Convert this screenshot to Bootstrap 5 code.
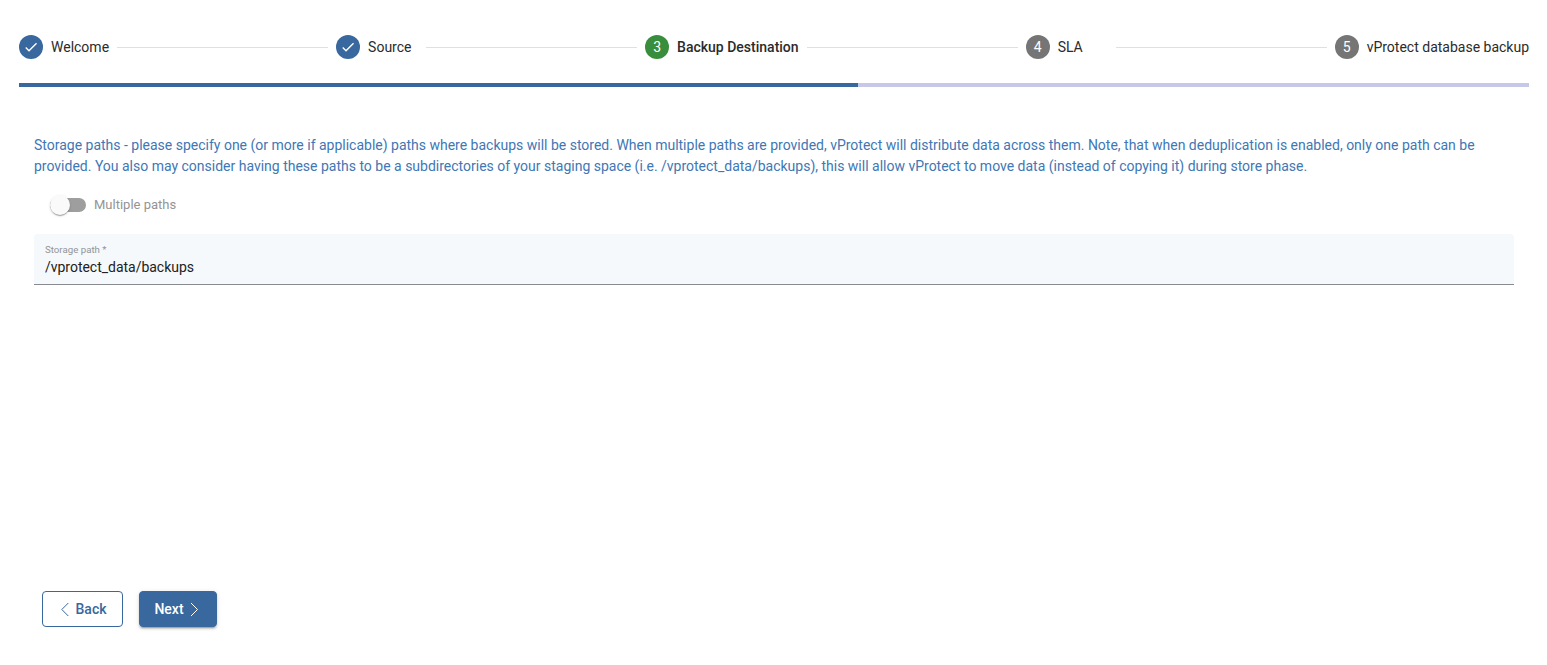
<!DOCTYPE html>
<html lang="en">
<head>
<meta charset="utf-8">
<meta name="viewport" content="width=device-width, initial-scale=1">
<title>vProtect setup</title>
<link href="https://cdn.jsdelivr.net/npm/bootstrap@5.3.0/dist/css/bootstrap.min.css" rel="stylesheet">
<style>
body{font-family:Roboto,"Liberation Sans",sans-serif;font-size:14px;line-height:21px;color:#2b2b2b;background:#fff}
.wizard{padding:35px 18px 38px 19px}
.step-mark{width:24px;height:24px;font-size:14px;line-height:24px;color:#fff;background:#757575}
.step-done .step-mark{background:#38689e}
.step-current .step-mark{background:#388e3c}
.step-current .step-text{font-weight:500}
.step-text{min-width:50px;white-space:nowrap}
.step-line{height:1px;background:#e0e0e0;margin:0 8px}
.wizard .progress{height:4px;border-radius:0;background:#c5c8e8;margin-top:24px}
.wizard .progress-bar{background:#38689e}
.step-body{padding:48px 15px 0}
.hint{color:#4077b5;margin-bottom:15px;letter-spacing:-.004px}
.toggle{padding-left:16px;height:24px;color:#949494;font-size:13px}
.toggle-track{width:36px;height:14px;margin-top:2px;border-radius:8px;background:#9e9e9e}
.toggle-thumb{width:20px;height:20px;top:-3px;left:0;background:#fafafa;box-shadow:0 2px 1px -1px rgba(0,0,0,.2),0 1px 1px rgba(0,0,0,.14),0 1px 3px rgba(0,0,0,.12)}
.path-field{margin-top:18px;height:51px;padding:9px 11px 0;background:#f5f9fc;border-bottom:1px solid #878a90;border-radius:4px 4px 0 0}
.path-field label{font-size:9.7px;line-height:13px;color:#949494}
.path-field input{font-size:14px;line-height:20px;color:#212121;height:20px;margin-top:1px;letter-spacing:-.02px}
.actions{padding-left:23px}
.actions .btn{height:36px;padding:0;font-size:14px;font-weight:500;border-radius:4px;border:1px solid #38689e}
.actions .btn-back{width:81px;padding-right:1px;color:#38689e;background:#fff}
.actions .btn-next{width:78px;color:#fff;background:#38689e;box-shadow:0 3px 1px -2px rgba(0,0,0,.2),0 2px 2px rgba(0,0,0,.14),0 1px 5px rgba(0,0,0,.12)}
</style>
</head>
<body>
<main class="wizard d-flex flex-column vh-100">
  <nav class="d-flex align-items-center">
    <div class="step-done d-flex align-items-center gap-2">
      <span class="step-mark rounded-circle d-flex align-items-center justify-content-center"><svg width="16" height="16" viewBox="0 0 24 24" fill="currentColor"><path d="M9 16.2 4.8 12l-1.4 1.4L9 19 21 7l-1.4-1.4z"/></svg></span>
      <span class="step-text">Welcome</span>
    </div>
    <div class="step-line flex-fill"></div>
    <div class="step-done d-flex align-items-center gap-2">
      <span class="step-mark rounded-circle d-flex align-items-center justify-content-center"><svg width="16" height="16" viewBox="0 0 24 24" fill="currentColor"><path d="M9 16.2 4.8 12l-1.4 1.4L9 19 21 7l-1.4-1.4z"/></svg></span>
      <span class="step-text">Source</span>
    </div>
    <div class="step-line flex-fill"></div>
    <div class="step-current d-flex align-items-center gap-2">
      <span class="step-mark rounded-circle text-center">3</span>
      <span class="step-text">Backup Destination</span>
    </div>
    <div class="step-line flex-fill"></div>
    <div class="d-flex align-items-center gap-2">
      <span class="step-mark rounded-circle text-center">4</span>
      <span class="step-text">SLA</span>
    </div>
    <div class="step-line flex-fill"></div>
    <div class="d-flex align-items-center gap-2">
      <span class="step-mark rounded-circle text-center">5</span>
      <span class="step-text">vProtect database backup</span>
    </div>
  </nav>
  <div class="progress flex-shrink-0"><div class="progress-bar" style="width:55.56%"></div></div>

  <section class="step-body">
    <p class="hint">Storage paths - please specify one (or more if applicable) paths where backups will be stored. When multiple paths are provided, vProtect will distribute data across them. Note, that when deduplication is enabled, only one path can be provided. You also may consider having these paths to be a subdirectories of your staging space (i.e. /vprotect_data/backups), this will allow vProtect to move data (instead of copying it) during store phase.</p>
    <div class="toggle d-flex align-items-center gap-2">
      <span class="toggle-track position-relative"><span class="toggle-thumb position-absolute rounded-circle"></span></span>
      <span>Multiple paths</span>
    </div>
    <div class="path-field">
      <label for="storagePath" class="d-block">Storage path *</label>
      <input id="storagePath" type="text" class="d-block w-100 border-0 p-0 bg-transparent" value="/vprotect_data/backups">
    </div>
  </section>

  <div class="actions d-flex gap-3 mt-auto">
    <button type="button" class="btn btn-back d-flex align-items-center justify-content-center"><svg class="me-1" width="14" height="14" viewBox="0 0 14 14" fill="none" stroke="currentColor"><path d="M10.300 1 3.800 7.500l6.500 6.500"/></svg>Back</button>
    <button type="button" class="btn btn-next d-flex align-items-center justify-content-center">Next<svg class="ms-1" width="14" height="14" viewBox="0 0 14 14" fill="none" stroke="currentColor"><path d="m3 1 6.500 6.500L3 14"/></svg></button>
  </div>
</main>
<script src="https://cdn.jsdelivr.net/npm/bootstrap@5.3.0/dist/js/bootstrap.bundle.min.js"></script>
</body>
</html>
